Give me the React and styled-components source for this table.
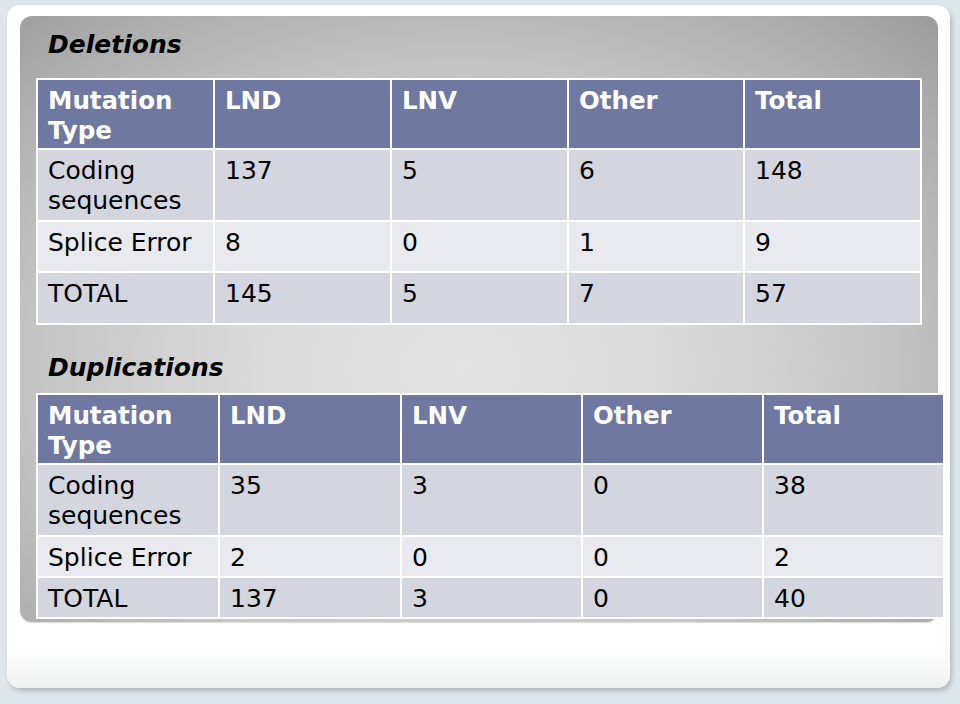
import React from "react";
import styled, { createGlobalStyle } from "styled-components";

const Global = createGlobalStyle`
  html, body { margin: 0; padding: 0; }
  body {
    background: #dde6ea;
    width: 960px;
    height: 704px;
    overflow: hidden;
    font-family: "DejaVu Sans", Verdana, sans-serif;
  }
`;

const Card = styled.div`
  box-sizing: border-box;
  margin: 5px 0 0 7px;
  width: 943px;
  height: 683px;
  background: linear-gradient(180deg, #ffffff 0%, #ffffff 94%, #f0f1f1 100%);
  border-radius: 13px;
  box-shadow: 2px 3px 4px rgba(90, 110, 120, 0.35);
  padding: 11px 0 0 13px;
`;

const Panel = styled.div`
  box-sizing: border-box;
  width: 918px;
  height: 606px;
  border-radius: 12px;
  padding: 14px 0 0 16px;
  background: radial-gradient(
    ellipse 75% 80% at 48% 58%,
    #e3e3e3 0%,
    #dadada 30%,
    #c4c4c4 62%,
    #a9a9a9 88%,
    #9c9c9c 100%
  );
  box-shadow: 0 1px 1px rgba(0, 0, 0, 0.15);
`;

const Title = styled.h2`
  margin: ${(p) => p.$top || 0}px 0 ${(p) => p.$bottom}px 0;
  padding-left: 12px;
  height: 30px;
  line-height: 30px;
  font-size: 25px;
  font-weight: bold;
  font-style: italic;
  color: #000;
`;

const Table = styled.table`
  border-collapse: collapse;
  table-layout: fixed;
  width: ${(p) => p.$width}px;
`;

const Cell = styled.td`
  box-sizing: border-box;
  border: 2px solid #ffffff;
  vertical-align: top;
  padding: 6px 8px 0 10px;
  line-height: 30px;
  font-size: 25px;
  color: #000;
  white-space: nowrap;
`;

const HeadCell = styled(Cell).attrs({ as: "th" })`
  text-align: left;
  font-weight: bold;
  font-size: 24.5px;
  color: #ffffff;
  background: #6e78a1;
  white-space: normal;
`;

const Row = styled.tr`
  height: ${(p) => p.$h}px;
  background: ${(p) => (p.$light ? "#e9eaef" : "#d3d6df")};
`;

const Wrap = styled.span`
  white-space: normal;
  display: block;
`;

function DataTable({ width, cols, rows, heights }) {
  return (
    <Table $width={width}>
      <colgroup>
        {cols.map((w, i) => (
          <col key={i} style={{ width: w }} />
        ))}
      </colgroup>
      <tbody>
        <Row $h={heights[0]}>
          <HeadCell>Mutation Type</HeadCell>
          <HeadCell>LND</HeadCell>
          <HeadCell>LNV</HeadCell>
          <HeadCell>Other</HeadCell>
          <HeadCell>Total</HeadCell>
        </Row>
        {rows.map((r, i) => (
          <Row key={i} $h={heights[i + 1]} $light={i === 1}>
            {r.map((c, j) => (
              <Cell key={j}>{j === 0 && i === 0 ? <Wrap>{c}</Wrap> : c}</Cell>
            ))}
          </Row>
        ))}
      </tbody>
    </Table>
  );
}

export default function App() {
  return (
    <>
      <Global />
      <Card>
        <Panel>
          <Title $bottom={18}>Deletions</Title>
          <DataTable
            width={884}
            cols={[177, 177, 177, 176, 177]}
            heights={[70, 72, 51, 52]}
            rows={[
              ["Coding sequences", "137", "5", "6", "148"],
              ["Splice Error", "8", "0", "1", "9"],
              ["TOTAL", "145", "5", "7", "57"],
            ]}
          />
          <Title $top={28} $bottom={10}>Duplications</Title>
          <DataTable
            width={907}
            cols={[182, 182, 181, 181, 181]}
            heights={[70, 72, 41, 41]}
            rows={[
              ["Coding sequences", "35", "3", "0", "38"],
              ["Splice Error", "2", "0", "0", "2"],
              ["TOTAL", "137", "3", "0", "40"],
            ]}
          />
        </Panel>
      </Card>
    </>
  );
}
